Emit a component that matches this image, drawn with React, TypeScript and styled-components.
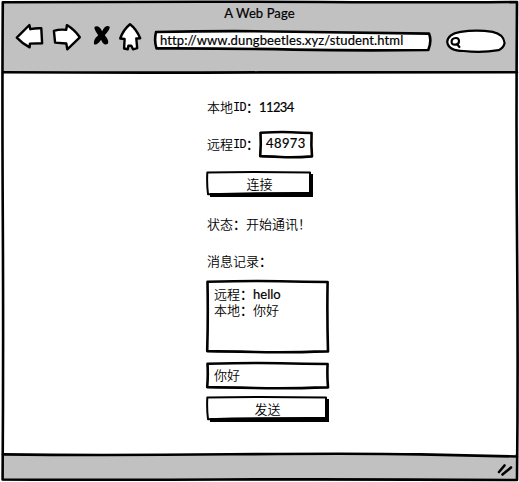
import React from "react";
import styled, { createGlobalStyle } from "styled-components";

const GlobalStyle = createGlobalStyle`
  * { box-sizing: border-box; }
  body { margin: 0; background: #fff; overflow: hidden; }
`;

const Window = styled.div`
  position: relative;
  width: 519px;
  height: 482px;
  padding: 2px 2px 1px;
  display: flex;
  flex-direction: column;
  background: #fff;
  color: #000;
  font-family: Lato, "Noto Sans CJK SC", sans-serif;
  font-size: 13px;
`;

const Sketch = styled.svg<{ $fill?: string; $stroke?: number }>`
  position: absolute;
  inset: 0;
  width: 100%;
  height: 100%;
  overflow: visible;
  pointer-events: none;
  fill: ${(p) => p.$fill ?? "none"};
  stroke: #000;
  stroke-width: ${(p) => p.$stroke ?? 2.6};
  stroke-linejoin: round;
  stroke-linecap: round;
`;

const Header = styled.header`
  height: 70px;
  flex: none;
  background: #c1c1c1;
`;

const Title = styled.div`
  height: 23px;
  line-height: 23px;
  text-align: center;
`;

const Latin = styled.span<{ $spacing?: number }>`
  font-family: Lato, sans-serif;
  font-weight: 400;
  font-size: 13px;
  letter-spacing: ${(p) => p.$spacing ?? 0}px;
  -webkit-text-stroke: 0.2px #000;
  white-space: pre;
`;

const Toolbar = styled.nav`
  display: flex;
  align-items: flex-start;
  padding-left: 12px;
`;

const NavIcons = styled.svg`
  width: 130px;
  height: 30px;
  margin-top: -3px;
  flex: none;
  fill: #fff;
  stroke: #000;
  stroke-width: 2.4;
  stroke-linejoin: round;
  stroke-linecap: round;
`;

const AddressBar = styled.div`
  position: relative;
  width: 278px;
  height: 21px;
  margin: 5px 0 0 10px;
  padding-left: 6px;
  line-height: 20px;
`;

const SearchBox = styled.div`
  position: relative;
  width: 60px;
  height: 24px;
  margin: 4px 0 0 14px;
`;

const Layer = styled.div`
  position: relative;
`;

const Main = styled.main`
  flex: 1;
  padding: 27px 0 0 204px;
  display: flex;
  flex-direction: column;
  align-items: flex-start;
`;

const Footer = styled.footer`
  height: 27px;
  flex: none;
  background: #c1c1c1;
`;

const Row = styled.div<{ $gap: number }>`
  display: flex;
  align-items: center;
  height: 16px;
  line-height: 16px;
  padding-left: 1px;
  white-space: pre;
  margin-top: ${(p) => p.$gap}px;
`;

const Han = styled.span`
  font-family: "Noto Sans CJK SC", sans-serif;
  font-weight: 350;
  font-size: 13px;
  line-height: 16px;
`;

const Colon = styled(Han)`
  width: 13px;
  flex: none;
  font-weight: 500;
`;

const Id = styled.span`
  display: inline-block;
  width: 13px;
  font: 12px/16px "DejaVu Sans Mono", monospace;
  letter-spacing: -0.7px;
`;

const Box = styled.div<{ $width: number; $height: number; $gap?: number }>`
  position: relative;
  width: ${(p) => p.$width}px;
  height: ${(p) => p.$height}px;
  margin-top: ${(p) => p.$gap ?? 0}px;
  flex: none;
`;

const IdField = styled(Box)`
  padding-left: 7px;
  line-height: 25px;
`;

const Button = styled(Box).attrs({ as: "button", type: "button" })`
  border: 0;
  padding: 0 0 1px;
  background: none;
  color: #000;
  display: flex;
  align-items: center;
  justify-content: center;
`;

const Log = styled(Box)`
  padding: 6px 0 0 8px;
  line-height: 16px;
`;

const LogLine = styled.div`
  height: 16px;
  line-height: 16px;
  display: flex;
  align-items: center;
`;

const Field = styled(Box)`
  padding: 5px 0 0 8px;
  line-height: 16px;
  display: flex;
`;

function BoxOutline({ width: w, height: h }: { width: number; height: number }) {
  return (
    <Sketch viewBox={`0 0 ${w} ${h}`}>
      <path d={`M1.5 1.7 Q${w * 0.4} .5 ${w * 0.6} 1.2 T${w - 1.4} 2 Q${w - 2} ${h * 0.5} ${w - 1} ${h - 1.6} Q${w * 0.65} ${h - 0.3} ${w * 0.4} ${h - 1} T1.2 ${h - 1.9} Q2.2 ${h * 0.5} 1.5 1.7Z`} />
    </Sketch>
  );
}

function ButtonOutline({ width: w, height: h }: { width: number; height: number }) {
  return (
    <Sketch viewBox={`0 0 ${w} ${h}`} $stroke={2}>
      <path d={`M4 ${h - 4}V${h}H${w}V3H${w - 3}V${h - 3}Z`} fill="#000" stroke="none" />
      <path d={`M1.3 1.6Q${w * 0.4} .5 ${w - 3} 1.6V${h - 4}Q${w * 0.5} ${h - 4.2} 2 ${h - 2.8}Q.7 ${h * 0.5} 1.3 1.6Z`} />
    </Sketch>
  );
}

export default function App() {
  return (
    <Window>
      <GlobalStyle />
      <Header>
        <Title><Latin $spacing={0.1}>A Web Page</Latin></Title>
        <Toolbar>
          <NavIcons viewBox="14.4 22.2 130 30">
            <path d="M17.2 37.8 29.8 25.2 30.7 29.4Q36 28.2 41.7 28.5L42.5 43.4 30.3 43.8 30 47.6Q23 44 17.2 37.8Z" />
            <path d="M54.3 31.1Q60 29.3 66.6 30.1L67.3 25.3Q75 30 80.2 37.5L67.7 49.5 66.7 43.7 55.5 42.8Z" />
            <path fill="#000" stroke="none" d="M95 27Q99.5 25 102.5 31.5Q105.5 25 109.8 26.6Q111.5 28 105.2 35.5Q110 41 108.2 44Q104 46.5 101.5 40Q97.5 46 94.4 44.5Q93.4 40 98.6 35.5Q94 29 95 27Z" />
            <path d="M130.4 24.4Q136.6 29 140.6 38.4L136.7 38.7 137.6 48.3 133.4 49.5 131.6 45.8 128.8 46 128.2 49.4 124.5 48.7 125 39.2 120.6 38.7Q123.6 30 130.4 24.4Z" />
          </NavIcons>
          <AddressBar>
            <Sketch viewBox="0 0 278 21" $fill="#fff">
              <path d="M2 2Q75 .5 140 1.7T275 3.6Q278 11 274.3 20Q205 21 140 19.6T2.5 18.4Q0 11 2 2Z" />
            </Sketch>
            <Layer><Latin $spacing={0.12}>http://www.dungbeetles.xyz/student.html</Latin></Layer>
          </AddressBar>
          <SearchBox>
            <Sketch viewBox="0 0 60 24" $fill="#fff" $stroke={2.2}>
              <path d="M1.2 13Q1.6 5 14.6 2.8Q30.6 .4 46.6 2.8Q57.6 5 58.6 14Q57.6 19 52.6 21.2Q35.6 24 17.6 22Q2.6 22 1.2 13Z" />
              <path d="M13 12.2Q13 8.8 9.8 9Q5.4 9.4 5.6 13Q5.6 15.9 9.4 15.7Q13 15.4 13 12.2ZM11 15 13.4 18" />
            </Sketch>
          </SearchBox>
        </Toolbar>
      </Header>
      <Main>
        <Row $gap={0}><Han>本地</Han><Id>ID</Id><Colon>：</Colon><Latin $spacing={-0.6}>11234</Latin></Row>
        <Row $gap={21}>
          <Han>远程</Han><Id>ID</Id><Colon>：</Colon>
          <IdField $width={54} $height={27}>
            <BoxOutline width={54} height={27} />
            <Latin $spacing={0.4}>48973</Latin>
          </IdField>
        </Row>
        <Button $width={107} $height={26} $gap={19}>
          <ButtonOutline width={107} height={26} /><Han>连接</Han>
        </Button>
        <Row $gap={19}><Han>状态</Han><Colon>：</Colon><Han>开始通讯！</Han></Row>
        <Row $gap={21}><Han>消息记录</Han><Colon>：</Colon></Row>
        <Log $width={123} $height={73} $gap={11}>
          <BoxOutline width={123} height={73} />
          <LogLine><Han>远程</Han><Colon>：</Colon><Latin>hello</Latin></LogLine>
          <LogLine><Han>本地</Han><Colon>：</Colon><Han>你好</Han></LogLine>
        </Log>
        <Field $width={123} $height={27} $gap={9}>
          <BoxOutline width={123} height={27} /><Han>你好</Han>
        </Field>
        <Button $width={123} $height={26} $gap={7}>
          <ButtonOutline width={123} height={26} /><Han>发送</Han>
        </Button>
      </Main>
      <Footer />
      <Sketch viewBox="0 0 519 482">
        <path d="M2.8 2.3Q180 1.4 320 2T517 2Q516 130 517.1 250T517 480Q360 479 220 479.5T2.6 479.5Q3.5 350 2.8 220T2.8 2.3Z" />
        <path d="M3 72.2Q130 73 260 72.4T517 72.3" />
        <path d="M420 454.4 515 456.5V453H420Z" fill="#fff" stroke="none" />
        <path d="M3 454.4Q100 455.5 230 454.3T420 454.4L517 456.5" />
        <path d="M499 472 504.5 465.5M502.5 474.5 511 467.5" />
      </Sketch>
    </Window>
  );
}
